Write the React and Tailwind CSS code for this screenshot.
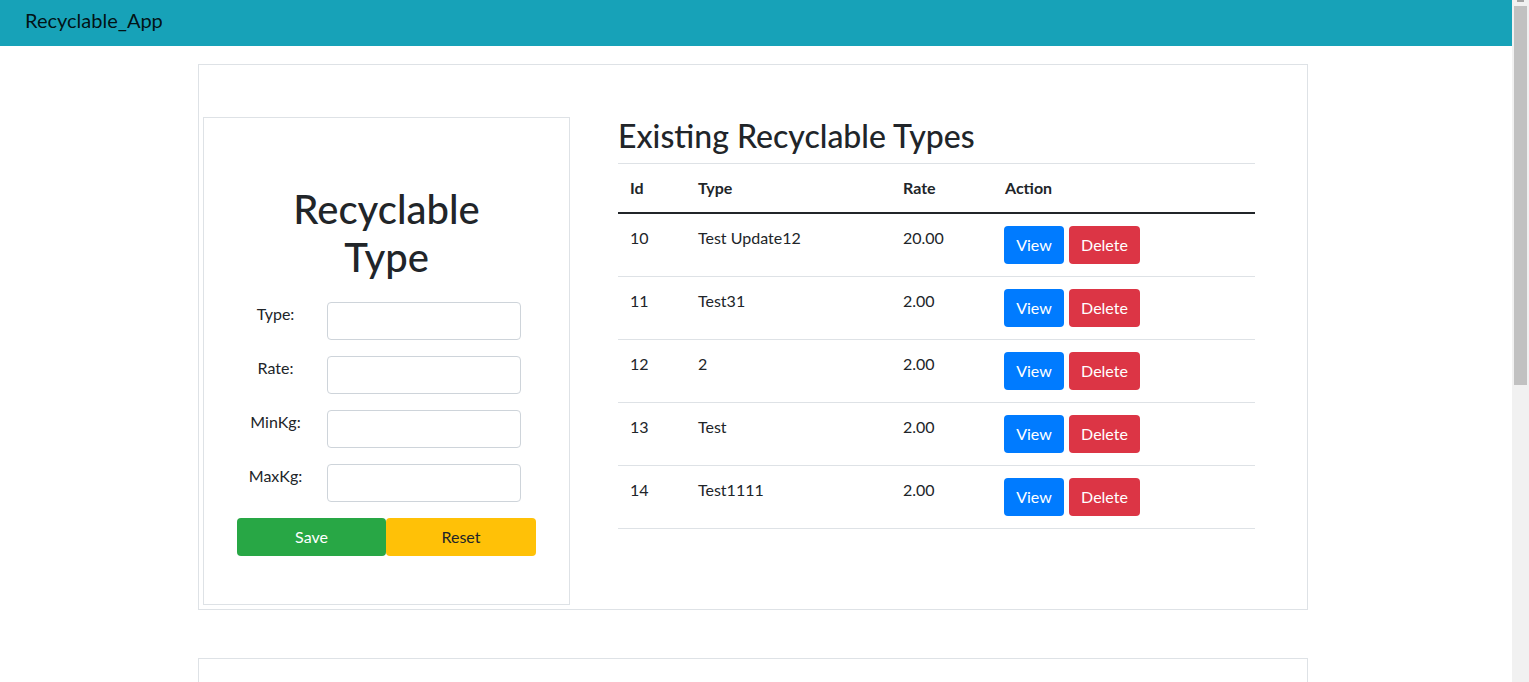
const rows = [
  { id: 10, type: 'Test Update12', rate: '20.00' },
  { id: 11, type: 'Test31', rate: '2.00' },
  { id: 12, type: '2', rate: '2.00' },
  { id: 13, type: 'Test', rate: '2.00' },
  { id: 14, type: 'Test1111', rate: '2.00' },
];

const fields = ['Type:', 'Rate:', 'MinKg:', 'MaxKg:'];

function FormCard() {
  return (
    <div className="mt-[52px] ml-[4px] w-[367px] border border-[#dee2e6] px-[33px] pt-[67px] pb-[48px] shrink-0">
      <h1 className="text-center text-[40px] leading-[48px] font-medium mb-[21px]">
        Recyclable
        <br />
        Type
      </h1>
      {fields.map((f) => (
        <div key={f} className="flex mb-4">
          <label className="w-[77px] text-center text-[16px] leading-6">{f}</label>
          <input
            type="text"
            className="ml-[13px] w-[194px] h-[38px] border border-[#ced4da] rounded-[4px] bg-white px-3 outline-none"
          />
        </div>
      ))}
      <div className="flex">
        <button className="w-[149px] h-[38px] bg-[#28a745] text-white text-[16px] rounded-[4px]">Save</button>
        <button className="w-[150px] h-[38px] bg-[#ffc107] text-[#212529] text-[16px] rounded-[4px]">Reset</button>
      </div>
    </div>
  );
}

function TypesTable() {
  return (
    <div className="ml-[48px] mt-[52px] w-[637px]">
      <h2 className="text-[32px] leading-[38px] font-medium mb-[8px]">Existing Recyclable Types</h2>
      <table className="w-full table-fixed border-collapse text-[16px] leading-6">
        <colgroup>
          <col className="w-[68px]" />
          <col className="w-[205px]" />
          <col className="w-[102px]" />
          <col className="w-[262px]" />
        </colgroup>
        <thead>
          <tr className="border-t border-[#dee2e6]">
            <th className="text-left font-bold p-3 border-b-2 border-[#212529]">Id</th>
            <th className="text-left font-bold p-3 border-b-2 border-[#212529]">Type</th>
            <th className="text-left font-bold p-3 border-b-2 border-[#212529]">Rate</th>
            <th className="text-left font-bold p-3 border-b-2 border-[#212529]">Action</th>
          </tr>
        </thead>
        <tbody>
          {rows.map((r) => (
            <tr key={r.id} className="border-b border-[#dee2e6]">
              <td className="p-3 align-top">{r.id}</td>
              <td className="p-3 align-top">{r.type}</td>
              <td className="p-3 align-top">{r.rate}</td>
              <td className="py-3 pl-[11px] pr-3 align-top">
                <div className="flex gap-[5px]">
                  <button className="w-[60px] h-[38px] bg-[#007bff] text-white rounded-[4px]">View</button>
                  <button className="w-[71px] h-[38px] bg-[#dc3545] text-white rounded-[4px]">Delete</button>
                </div>
              </td>
            </tr>
          ))}
        </tbody>
      </table>
    </div>
  );
}

export default function App() {
  return (
    <div
      className="flex h-[682px] overflow-hidden bg-white text-[#212529]"
      style={{ fontFamily: 'Lato, "Open Sans", sans-serif' }}
    >
      <div className="flex-1 min-w-0">
        <nav className="h-[46px] bg-[#17a2b8] flex items-center pl-[25px] pb-[6px]">
          <span className="text-[20px] text-black/90">Recyclable_App</span>
        </nav>
        <div className="ml-[198px] w-[1110px]">
          <div className="mt-[18px] border border-[#dee2e6] flex pb-[4px]">
            <FormCard />
            <TypesTable />
          </div>
          <div className="mt-[48px] h-[200px] border border-[#dee2e6]"></div>
        </div>
      </div>
      <div className="w-[17px] bg-[#f1f1f1] flex flex-col items-center shrink-0">
        <div className="w-[7px] h-[2px] bg-[#a3a3a3]"></div>
        <div className="mt-[4px] w-[13px] h-[379px] bg-[#c1c1c1]"></div>
      </div>
    </div>
  );
}
